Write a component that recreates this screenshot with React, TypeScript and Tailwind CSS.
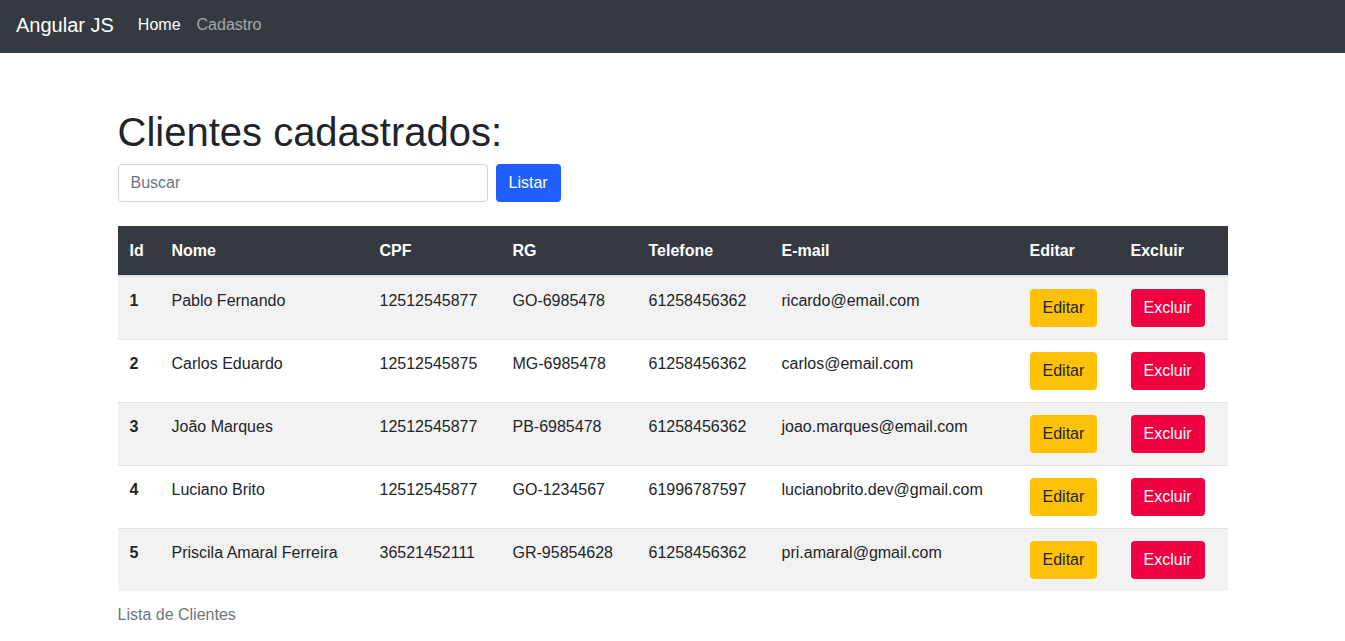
const clientes = [
  { id: 1, nome: "Pablo Fernando", cpf: "12512545877", rg: "GO-6985478", tel: "61258456362", email: "ricardo@email.com" },
  { id: 2, nome: "Carlos Eduardo", cpf: "12512545875", rg: "MG-6985478", tel: "61258456362", email: "carlos@email.com" },
  { id: 3, nome: "João Marques", cpf: "12512545877", rg: "PB-6985478", tel: "61258456362", email: "joao.marques@email.com" },
  { id: 4, nome: "Luciano Brito", cpf: "12512545877", rg: "GO-1234567", tel: "61996787597", email: "lucianobrito.dev@gmail.com" },
  { id: 5, nome: "Priscila Amaral Ferreira", cpf: "36521452111", rg: "GR-95854628", tel: "61258456362", email: "pri.amaral@gmail.com" },
];

export default function App() {
  return (
    <div className="min-h-screen bg-white text-[16px] leading-6 text-[#212529] font-['Liberation_Sans',Arial,sans-serif]">
      <nav className="h-[53px] bg-[#343a40] px-4 pb-1 flex items-center">
        <span className="text-[20px] text-white mr-6">Angular JS</span>
        <a href="#" className="text-white mr-4">Home</a>
        <a href="#" className="text-white/55">Cadastro</a>
      </nav>

      <div className="w-[1110px] mx-auto pt-[55px]">
        <h1 className="text-[40px] leading-[48px] mb-2">Clientes cadastrados:</h1>
        <div className="flex gap-2 mb-6">
          <input
            placeholder="Buscar"
            className="w-[370px] h-[38px] px-3 border border-[#ced4da] rounded placeholder:text-[#6c757d] outline-none"
          />
          <button className="h-[38px] px-3 border border-transparent rounded bg-[#1f5fff] text-white">Listar</button>
        </div>

        <table className="w-full border-collapse text-left">
          <caption className="caption-bottom text-left text-[#6c757d] pt-3 pb-2">Lista de Clientes</caption>
          <thead>
            <tr className="bg-[#343a40] text-white font-bold border-b-2 border-[#dee2e6]">
              <th className="w-[42px] px-3 pt-[13px] pb-3">Id</th>
              <th className="w-[208px] px-3 pt-[13px] pb-3">Nome</th>
              <th className="w-[133px] px-3 pt-[13px] pb-3">CPF</th>
              <th className="w-[136px] px-3 pt-[13px] pb-3">RG</th>
              <th className="w-[133px] px-3 pt-[13px] pb-3">Telefone</th>
              <th className="w-[248px] px-3 pt-[13px] pb-3">E-mail</th>
              <th className="w-[101px] px-3 pt-[13px] pb-3">Editar</th>
              <th className="px-3 pt-[13px] pb-3">Excluir</th>
            </tr>
          </thead>
          <tbody>
            {clientes.map((c, i) => (
              <tr key={c.id} className={`border-t border-[#dee2e6] align-top ${i % 2 === 0 ? "bg-[#f2f2f2]" : "bg-white"}`}>
                <td className="p-3 font-bold">{c.id}</td>
                <td className="p-3">{c.nome}</td>
                <td className="p-3">{c.cpf}</td>
                <td className="p-3">{c.rg}</td>
                <td className="p-3">{c.tel}</td>
                <td className="p-3">{c.email}</td>
                <td className="p-3">
                  <button className="h-[38px] px-3 border border-transparent rounded bg-[#ffc107] text-[#212529]">Editar</button>
                </td>
                <td className="p-3">
                  <button className="h-[38px] px-3 border border-transparent rounded bg-[#ef0041] text-white">Excluir</button>
                </td>
              </tr>
            ))}
          </tbody>
        </table>
      </div>
    </div>
  );
}
